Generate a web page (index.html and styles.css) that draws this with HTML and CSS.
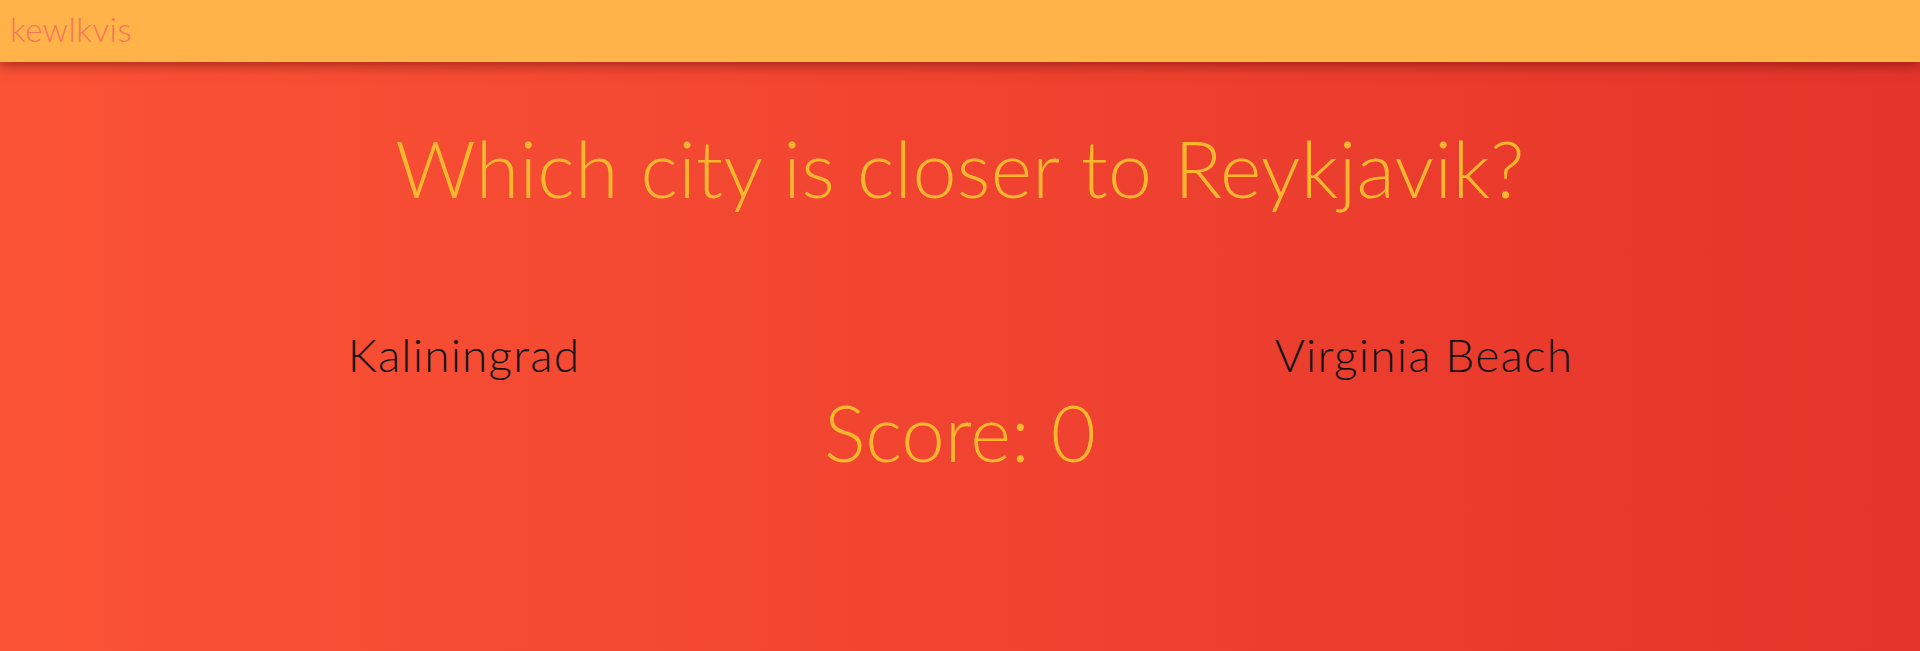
FILE: index.html
```html
<!DOCTYPE html>
<html>
<head>
<meta charset="utf-8">
<title>kewlkvis</title>
<link rel="stylesheet" href="styles.css">
</head>
<body>
<header class="topbar">
  <span class="logo">kewlkvis</span>
</header>
<main class="game">
  <h1 class="question">Which city is closer to Reykjavik?</h1>
  <div class="choices">
    <div class="choice">Kaliningrad</div>
    <div class="choice">Virginia Beach</div>
  </div>
  <div class="score">Score: 0</div>
</main>
</body>
</html>
```
FILE: styles.css
```css
html, body {
  margin: 0;
  padding: 0;
  height: 100%;
}
body {
  background: linear-gradient(to right, #fb5336, #e5342a);
  font-family: Lato, "Liberation Sans", sans-serif;
  font-weight: 300;
  overflow: hidden;
}
.topbar {
  position: relative;
  z-index: 2;
  height: 62px;
  background: #ffb349;
  box-shadow: 0 3px 12px rgba(90, 10, 0, 0.55);
  display: flex;
  align-items: center;
  padding-left: 10px;
}
.logo {
  font-size: 33px;
  font-weight: 300;
  color: #f8745a;
  letter-spacing: 0.5px;
  line-height: 1;
  margin-top: -4px;
}
.game {
  display: flex;
  flex-direction: column;
  align-items: center;
}
.question {
  margin: 59px 0 0;
  font-size: 79px;
  line-height: 1.2;
  font-weight: 300;
  color: #ffb72e;
  letter-spacing: 0.35px;
  white-space: nowrap;
}
.choices {
  margin-top: 111px;
  width: 100%;
  display: flex;
  gap: 32px;
  padding-right: 32px;
  box-sizing: border-box;
}
.choice {
  flex: 1;
  text-align: center;
  font-size: 46px;
  line-height: 1.2;
  letter-spacing: 1.2px;
  color: #111;
  font-weight: 300;
}
.score {
  margin-top: 4px;
  font-size: 78px;
  line-height: 1.2;
  color: #ffb72e;
  font-weight: 300;
}
```
